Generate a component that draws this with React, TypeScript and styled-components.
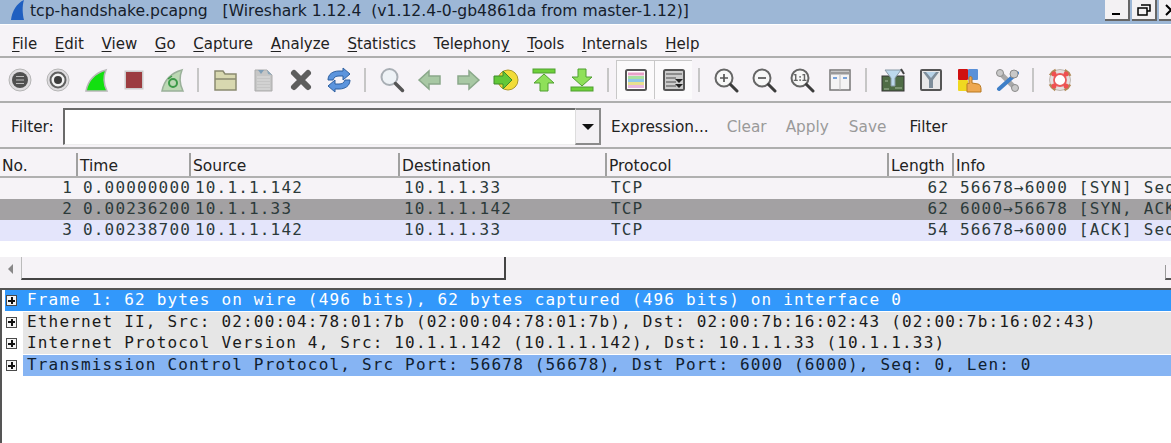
import React from 'react';
import styled, { createGlobalStyle } from 'styled-components';

const Global = createGlobalStyle`
  html, body { margin: 0; padding: 0; background: #fff; overflow: hidden; }
  * { box-sizing: border-box; }
`;

const uiFont = `"DejaVu Sans", "Noto Sans", sans-serif`;
const monoFont = `"DejaVu Sans Mono", "Liberation Mono", monospace`;

const Window = styled.div`
  width: 1171px;
  height: 443px;
  overflow: hidden;
  display: flex;
  flex-direction: column;
  background: #f6f3f7;
  font-family: ${uiFont};
  color: #222;
`;

const TitleBar = styled.div`
  height: 24px;
  flex: none;
  background: #9db7d6;
  display: flex;
  align-items: flex-start;
  padding-left: 11px;
  font-size: 15.6px;
  line-height: 22px;
  color: #15202b;
  white-space: pre;
`;

const TitleText = styled.span`
  margin-left: 6px;
`;

const SharkLogo = styled.svg`
  flex: none;
`;

const WindowButtons = styled.div`
  margin-left: auto;
  display: flex;
  gap: 2px;
  margin-right: -13px;
`;

const WindowButton = styled.div`
  width: 25px;
  height: 21px;
  background: #f3f1f3;
  border-right: 2px solid #666;
  border-bottom: 2px solid #666;
  display: flex;
  align-items: center;
  justify-content: center;
`;

const MenuBar = styled.div`
  height: 32px;
  flex: none;
  display: flex;
  align-items: center;
  gap: 17.7px;
  padding: 7px 0 0 12px;
  font-size: 15px;
  border-top: 1px solid #fff;
`;

const MenuItem = styled.span`
  u { text-underline-offset: 2px; }
`;

const Rule = styled.div`
  height: 2px;
  flex: none;
  background: #aeaeae;
`;

const Toolbar = styled.div`
  height: 43px;
  flex: none;
  display: flex;
  align-items: center;
  padding-left: 1px;
`;

const ToolIcon = styled.div<{ $pressed?: boolean }>`
  width: 38px;
  height: ${(p) => (p.$pressed ? '39px' : '26px')};
  flex: none;
  display: flex;
  align-items: center;
  justify-content: center;
  svg { filter: blur(0.4px); }
  ${(p) => p.$pressed && `
    background: #fbfafb;
    border-left: 1px solid #c8c8c8;
    border-top: 1px solid #c8c8c8;
  `}
`;

const ToolSep = styled.div`
  width: 2px;
  height: 24px;
  flex: none;
  background: #c6c6c6;
  margin: 0 7px 0 6px;
`;

const FilterBar = styled.div`
  height: 44px;
  flex: none;
  display: flex;
  align-items: center;
  padding: 3px 0 0 11px;
  font-size: 15.3px;
`;

const FilterLabel = styled.span`
  width: 52px;
  flex: none;
  padding-top: 1px;
`;

const FilterInput = styled.div`
  width: 512px;
  height: 37px;
  background: #fff;
  border-top: 2px solid #6a6a6a;
  border-left: 2px solid #6a6a6a;
  border-bottom: 1px solid #eee;
  flex: none;
`;

const ComboButton = styled.div`
  width: 26px;
  height: 37px;
  flex: none;
  background: #f3f1f4;
  border-top: 2px solid #8a8a8a;
  border-right: 2px solid #8a8a8a;
  border-bottom: 2px solid #8a8a8a;
  border-left: 1px solid #ddd;
  display: flex;
  align-items: center;
  justify-content: center;
  &::after {
    content: '';
    border-left: 6px solid transparent;
    border-right: 6px solid transparent;
    border-top: 6px solid #111;
  }
`;

const FilterAction = styled.span<{ $disabled?: boolean; $gap: number }>`
  margin-left: ${(p) => p.$gap}px;
  padding-top: 1px;
  color: ${(p) => (p.$disabled ? '#9a9a9a' : '#222')};
`;

const PacketList = styled.div`
  height: 108px;
  flex: none;
  background: #fff;
  display: flex;
  flex-direction: column;
`;

const Columns = '78px 113px 209px 207px 282px 65px 1fr';

const HeaderRow = styled.div`
  height: 29px;
  flex: none;
  display: grid;
  grid-template-columns: ${Columns};
  background: #f6f3f7;
  border-top: 4px solid #f6f3f7;
  border-bottom: 2px solid #b0b0b0;
`;

const HeaderCell = styled.div`
  font-size: 15.5px;
  line-height: 27px;
  padding-left: 2px;
  border-right: 2px solid #a0a0a0;
  white-space: nowrap;
  overflow: hidden;
  &:last-child { border-right: none; }
`;

const PacketRow = styled.div<{ $bg: string }>`
  height: 21px;
  flex: none;
  display: grid;
  grid-template-columns: ${Columns};
  background: ${(p) => p.$bg};
  font-family: ${monoFont};
  font-size: 16px;
  letter-spacing: 1.17px;
  line-height: 20px;
  color: #2c3a3a;
  white-space: pre;
`;

const PacketCell = styled.div<{ $right?: boolean }>`
  padding: ${(p) => (p.$right ? '0 5px 0 0' : '0 0 0 4px')};
  text-align: ${(p) => (p.$right ? 'right' : 'left')};
  overflow: hidden;
  &:nth-child(2) { padding-left: 5px; overflow: visible; }
  &:last-child { padding-left: 6px; }
`;

const ScrollBar = styled.div`
  height: 23px;
  flex: none;
  background: #f3f1f4;
  display: flex;
  align-items: center;
`;

const ScrollArrow = styled.div`
  width: 21px;
  height: 100%;
  flex: none;
  display: flex;
  align-items: center;
  justify-content: center;
  &::after {
    content: '';
    border-top: 5px solid transparent;
    border-bottom: 5px solid transparent;
    border-right: 5px solid #888;
  }
`;

const ScrollThumb = styled.div`
  width: 485px;
  height: 100%;
  flex: none;
  background: #f6f3f7;
  border-left: 1px solid #bbb;
  border-right: 2px solid #444;
  border-bottom: 2px solid #444;
`;

const ScrollEnd = styled.div`
  width: 6px;
  height: 15px;
  align-self: flex-end;
  margin-left: auto;
  background: #f6f3f7;
  border-left: 1px solid #999;
  border-bottom: 2px solid #555;
`;

const DetailPanel = styled.div`
  flex: 1;
  margin-top: 8px;
  background: #fff;
  border-top: 2px solid #555;
  border-left: 2px solid #555;
`;

const DetailRow = styled.div`
  height: 21.7px;
  display: flex;
  align-items: flex-start;
`;

const Expander = styled.div<{ $bg?: string }>`
  width: 18px;
  height: 21px;
  margin-left: 3px;
  padding-right: 5px;
  flex: none;
  background: ${(p) => p.$bg ?? 'transparent'};
  display: flex;
  align-items: center;
  justify-content: center;
`;

const ExpanderBox = styled.div`
  width: 11px;
  height: 11px;
  border: 1px solid #4a4a4a;
  background: #f4f4f4;
  position: relative;
  &::before {
    content: '';
    position: absolute;
    left: 1px;
    right: 1px;
    top: 3.5px;
    height: 2px;
    background: #111;
  }
  &::after {
    content: '';
    position: absolute;
    top: 1px;
    bottom: 1px;
    left: 3.5px;
    width: 2px;
    background: #111;
  }
`;

const DetailText = styled.div<{ $bg: string; $fg: string }>`
  flex: 1;
  height: 21px;
  padding-left: 4px;
  background: ${(p) => p.$bg};
  color: ${(p) => p.$fg};
  font-family: ${monoFont};
  font-size: 16px;
  letter-spacing: 1.17px;
  line-height: 20px;
  white-space: pre;
`;

const Svg: React.FC<{ children: React.ReactNode }> = ({ children }) => (
  <svg width="26" height="26" viewBox="0 0 26 26">{children}</svg>
);

const mag = (inner: React.ReactNode) => (
  <Svg>
    <circle cx="11" cy="11" r="8.5" fill="#f7f7f7" stroke="#666" strokeWidth="2" />
    <path d="M17.500 17.500l6.500 6.500" stroke="#3c3c3c" strokeWidth="3" strokeLinecap="round" />
    {inner}
  </Svg>
);

const icons: Record<string, React.ReactNode> = {
  interfaces: (
    <Svg>
      <circle cx="13" cy="13" r="11" fill="#dedcdf" stroke="#b4b4b4" />
      <circle cx="13" cy="13" r="8" fill="#505050" />
      <path d="M9 9.500h8M9 13h8M9 16.500h8" stroke="#bbb" strokeWidth="1.200" />
    </Svg>
  ),
  options: (
    <Svg>
      <circle cx="13" cy="13" r="11" fill="#dedcdf" stroke="#b4b4b4" />
      <circle cx="13" cy="13" r="7.500" fill="#f2f2f2" stroke="#606060" strokeWidth="2" />
      <circle cx="13" cy="13" r="4" fill="#3c3c3c" />
    </Svg>
  ),
  start: (
    <Svg>
      <path d="M3 24C5 14 12 6 23 3c-3 7-2 15 1 21z" fill="#12e010" stroke="#b8b8b8" strokeWidth="1.500" />
    </Svg>
  ),
  stop: (
    <Svg>
      <rect x="3.500" y="3.500" width="19" height="19" fill="#ccc" />
      <rect x="5" y="5" width="16" height="16" fill="#9c3c40" />
    </Svg>
  ),
  restart: (
    <Svg>
      <path d="M3 24C5 14 12 6 23 3c-3 7-2 15 1 21z" fill="#bcd8b4" stroke="#9ab09a" strokeWidth="1.500" />
      <circle cx="14" cy="16" r="4" fill="none" stroke="#3c9a48" strokeWidth="2" />
      <path d="M9 12l4-3" stroke="#3c9a48" strokeWidth="1.500" />
    </Svg>
  ),
  open: (
    <Svg>
      <path d="M3 4h8l2 3h11v16H3z" fill="#d8d8b0" stroke="#8a8a70" strokeWidth="1.500" />
      <path d="M3 12h21" stroke="#8a8a70" strokeWidth="1.500" />
    </Svg>
  ),
  save: (
    <Svg>
      <path d="M5 3h12l5 5v16H5z" fill="#c6c6c6" stroke="#ababab" />
      <path d="M7 10h13M7 13h13M7 16h13M7 19h13M7 22h13" stroke="#dedede" />
      <path d="M8 3l3 4 3-4z" fill="#7f9fb8" />
      <path d="M17 3l1 4 4 1z" fill="#8aa8bc" />
    </Svg>
  ),
  close: (
    <Svg>
      <path d="M6 6l14 14M20 6L6 20" stroke="#5e5e5e" strokeWidth="6" strokeLinecap="round" />
    </Svg>
  ),
  reload: (
    <Svg>
      <path d="M2 13C2 7 7 4 13 4h4V1l7 6-7 6V9h-4c-3 0-5 1-6 4z" fill="#5b94dd" stroke="#2d5f9f" />
      <path d="M24 13c0 6-5 9-11 9H9v3l-7-6 7-6v4h4c3 0 5-1 6-4z" fill="#5b94dd" stroke="#2d5f9f" />
    </Svg>
  ),
  find: (
    <Svg>
      <circle cx="10.500" cy="10" r="8" fill="#eef2f6" stroke="#a8aeb4" strokeWidth="2" />
      <path d="M16.500 16.500l7 7" stroke="#555" strokeWidth="3.500" strokeLinecap="round" />
    </Svg>
  ),
  back: (
    <Svg>
      <path d="M2 13l10-9v5h11v8H12v5z" fill="#a8c8a4" stroke="#8aa88a" strokeWidth="1.500" />
    </Svg>
  ),
  forward: (
    <Svg>
      <path d="M24 13l-10-9v5H3v8h11v5z" fill="#a8c8a4" stroke="#8aa88a" strokeWidth="1.500" />
    </Svg>
  ),
  goto: (
    <Svg>
      <circle cx="15" cy="13" r="10" fill="#f2dc38" stroke="#a8962a" />
      <path d="M1 9h9V4l9 9-9 9v-5H1z" fill="#62c838" stroke="#3c8a2a" />
    </Svg>
  ),
  first: (
    <Svg>
      <rect x="2" y="2" width="22" height="4" fill="#6ed03a" stroke="#4f9f30" />
      <path d="M13 7l10 9h-6v8H9v-8H3z" fill="#8fe05a" stroke="#4f9f30" />
    </Svg>
  ),
  last: (
    <Svg>
      <rect x="2" y="20" width="22" height="4" fill="#6ed03a" stroke="#4f9f30" />
      <path d="M13 19l10-9h-6V2H9v8H3z" fill="#8fe05a" stroke="#4f9f30" />
    </Svg>
  ),
  colorize: (
    <Svg>
      <rect x="3" y="3" width="20" height="20" rx="1.500" fill="#fff" stroke="#555" strokeWidth="2" />
      <path d="M5 7h16" stroke="#e8a0c8" strokeWidth="3" />
      <path d="M5 10.500h16" stroke="#a8e0a0" strokeWidth="3" />
      <path d="M5 13.500h16" stroke="#90c8e8" strokeWidth="3" />
      <path d="M5 16.500h16" stroke="#e8e090" strokeWidth="3" />
      <path d="M5 19.500h16" stroke="#e8b8e0" strokeWidth="3" />
    </Svg>
  ),
  autoscroll: (
    <Svg>
      <rect x="3" y="3" width="20" height="20" rx="1.500" fill="#ccc" stroke="#555" strokeWidth="2" />
      <path d="M5 7h16M5 11h10M5 15h10M5 19h10" stroke="#8c8c8c" strokeWidth="2" />
      <path d="M14 12h8l-4 4zM14 17h8l-4 4z" fill="#222" />
    </Svg>
  ),
  zoomIn: mag(<path d="M7 11h8M11 7v8" stroke="#555" strokeWidth="1.700" />),
  zoomOut: mag(<path d="M7 11h8" stroke="#555" strokeWidth="1.700" />),
  zoomReset: mag(<text x="11" y="14" fontSize="8" fontWeight="700" textAnchor="middle" fontFamily="DejaVu Sans" fill="#666">1:1</text>),
  resize: (
    <Svg>
      <rect x="3" y="3" width="20" height="20" fill="#f4f4f4" stroke="#777" strokeWidth="1.500" />
      <path d="M3 6h20" stroke="#999" strokeWidth="3" />
      <path d="M13 8v15" stroke="#bbb" />
      <path d="M6 11h4M16 11h4" stroke="#4d86cf" strokeWidth="1.500" />
    </Svg>
  ),
  captureFilter: (
    <Svg>
      <rect x="2" y="9" width="22" height="15" fill="#4f6c46" stroke="#333" />
      <path d="M4 22h5M15 21h7M5 14h3" stroke="#a8bca0" />
      <path d="M5 3h16l-6 8v8h-4v-8z" fill="#bcd8ec" stroke="#8898a4" />
      <path d="M21 2l3 5" stroke="#444" strokeWidth="2" />
    </Svg>
  ),
  displayFilter: (
    <Svg>
      <rect x="3" y="3" width="20" height="20" rx="1" fill="#e8e8e8" stroke="#555" strokeWidth="2" />
      <path d="M5 5h16l-6 8v8h-4v-8z" fill="#7e8e9a" />
      <path d="M8 5h10l-5 6z" fill="#b8d4e8" />
    </Svg>
  ),
  coloring: (
    <Svg>
      <rect x="2" y="2" width="10" height="11" rx="1" fill="#d01010" />
      <rect x="12" y="2" width="10" height="11" rx="1" fill="#5a90d8" />
      <rect x="2" y="13" width="10" height="11" rx="1" fill="#f0d820" />
      <path d="M11 25v-8c0-1 2-1 2 0v-6c0-2 3-2 3 0v5l6 1c2 0 3 3 3 5v3z" fill="#eea850" stroke="#b87820" />
    </Svg>
  ),
  prefs: (
    <Svg>
      <path d="M5 5l16 16" stroke="#a8a8a8" strokeWidth="5" />
      <circle cx="21" cy="21" r="3.500" fill="#c8c8c8" stroke="#8a8a8a" />
      <path d="M23 6L5 22" stroke="#3f7fc8" strokeWidth="4" strokeLinecap="round" />
      <circle cx="20" cy="7" r="4" fill="#c8c8c8" stroke="#8a8a8a" />
      <circle cx="6" cy="6" r="3.500" fill="#c8c8c8" stroke="#8a8a8a" />
    </Svg>
  ),
  help: (
    <Svg>
      <circle cx="13" cy="13" r="10.500" fill="#e4e0e0" stroke="#bdb6b0" />
      <circle cx="13" cy="13" r="11" fill="none" stroke="#b08a58" strokeWidth="2.500" strokeDasharray="8 9.280" strokeDashoffset="-4.600" />
      <circle cx="13" cy="13" r="6" fill="#fff" stroke="#ea5a5a" strokeWidth="1.800" />
      <circle cx="7" cy="7" r="2.500" fill="#f05050" />
      <circle cx="19" cy="7" r="2.500" fill="#f05050" />
      <circle cx="7" cy="19" r="2.500" fill="#f05050" />
      <circle cx="19" cy="19" r="2.500" fill="#f05050" />
    </Svg>
  ),
};

const toolbar: (string | null)[] = [
  'interfaces', 'options', 'start', 'stop', 'restart', null,
  'open', 'save', 'close', 'reload', null,
  'find', 'back', 'forward', 'goto', 'first', 'last', null,
  'colorize', 'autoscroll', null,
  'zoomIn', 'zoomOut', 'zoomReset', 'resize', null,
  'captureFilter', 'displayFilter', 'coloring', 'prefs', null,
  'help',
];

const menus = [
  ['F', 'ile'], ['E', 'dit'], ['V', 'iew'], ['G', 'o'], ['C', 'apture'], ['A', 'nalyze'],
  ['S', 'tatistics'], ['Telephon', 'y', true], ['T', 'ools'], ['I', 'nternals'], ['H', 'elp'],
] as const;

const headers = ['No.', 'Time', 'Source', 'Destination', 'Protocol', 'Length', 'Info'];

const packets = [
  { bg: '#f6f3f7', cells: ['1', '0.00000000', '10.1.1.142', '10.1.1.33', 'TCP', '62', '56678\u21926000 [SYN] Seq=0'] },
  { bg: '#a3a1a3', cells: ['2', '0.00236200', '10.1.1.33', '10.1.1.142', 'TCP', '62', '6000\u219256678 [SYN, ACK] Seq=0'] },
  { bg: '#e4e5fb', cells: ['3', '0.00238700', '10.1.1.142', '10.1.1.33', 'TCP', '54', '56678\u21926000 [ACK] Seq=1'] },
];

const details = [
  { bg: '#3298fb', fg: '#fff', full: true, text: 'Frame 1: 62 bytes on wire (496 bits), 62 bytes captured (496 bits) on interface 0' },
  { bg: '#e6e6e6', fg: '#1a1a1a', text: 'Ethernet II, Src: 02:00:04:78:01:7b (02:00:04:78:01:7b), Dst: 02:00:7b:16:02:43 (02:00:7b:16:02:43)' },
  { bg: '#e6e6e6', fg: '#1a1a1a', text: 'Internet Protocol Version 4, Src: 10.1.1.142 (10.1.1.142), Dst: 10.1.1.33 (10.1.1.33)' },
  { bg: '#86b4f3', fg: '#10202f', text: 'Transmission Control Protocol, Src Port: 56678 (56678), Dst Port: 6000 (6000), Seq: 0, Len: 0' },
];

const App: React.FC = () => (
  <Window>
    <Global />
    <TitleBar>
      <SharkLogo width="13" height="20" viewBox="0 0 13 20">
        <path d="M0 20C1 11 6 3 13 0c-2 6-1.500 14 0 20z" fill="#1f5fc0" />
      </SharkLogo>
      <TitleText>tcp-handshake.pcapng   [Wireshark 1.12.4  (v1.12.4-0-gb4861da from master-1.12)]</TitleText>
      <WindowButtons>
        <WindowButton>
          <svg width="12" height="12"><rect x="1" y="9" width="8" height="2" fill="#000" /></svg>
        </WindowButton>
        <WindowButton>
          <svg width="14" height="12"><path d="M4 1h9v6h-3M1 4h9v7H1z" fill="none" stroke="#000" strokeWidth="1.500" /></svg>
        </WindowButton>
        <WindowButton>
          <svg width="12" height="12"><path d="M1 1l10 10M11 1L1 11" stroke="#000" strokeWidth="2" /></svg>
        </WindowButton>
      </WindowButtons>
    </TitleBar>
    <MenuBar>
      {menus.map((m) => (
        <MenuItem key={m[0] + m[1]}>
          {m.length === 3 ? <>{m[0]}<u>{m[1]}</u></> : <><u>{m[0]}</u>{m[1]}</>}
        </MenuItem>
      ))}
    </MenuBar>
    <Rule />
    <Toolbar>
      {toolbar.map((name, i) =>
        name === null ? (
          <ToolSep key={i} />
        ) : (
          <ToolIcon key={name} $pressed={name === 'colorize' || name === 'autoscroll'}>
            {icons[name]}
          </ToolIcon>
        ),
      )}
    </Toolbar>
    <Rule />
    <FilterBar>
      <FilterLabel>Filter:</FilterLabel>
      <FilterInput />
      <ComboButton />
      <FilterAction $gap={10}>Expression...</FilterAction>
      <FilterAction $gap={18} $disabled>Clear</FilterAction>
      <FilterAction $gap={19} $disabled>Apply</FilterAction>
      <FilterAction $gap={20} $disabled>Save</FilterAction>
      <FilterAction $gap={23}>Filter</FilterAction>
    </FilterBar>
    <Rule />
    <PacketList>
      <HeaderRow>
        {headers.map((h) => <HeaderCell key={h}>{h}</HeaderCell>)}
      </HeaderRow>
      {packets.map((p) => (
        <PacketRow key={p.cells[0]} $bg={p.bg}>
          {p.cells.map((c, i) => (
            <PacketCell key={i} $right={i === 0 || i === 5}>{c}</PacketCell>
          ))}
        </PacketRow>
      ))}
    </PacketList>
    <ScrollBar>
      <ScrollArrow />
      <ScrollThumb />
      <ScrollEnd />
    </ScrollBar>
    <DetailPanel>
      {details.map((d) => (
        <DetailRow key={d.text}>
          <Expander $bg={d.full ? d.bg : undefined}><ExpanderBox /></Expander>
          <DetailText $bg={d.bg} $fg={d.fg}>{d.text}</DetailText>
        </DetailRow>
      ))}
    </DetailPanel>
  </Window>
);

export default App;
